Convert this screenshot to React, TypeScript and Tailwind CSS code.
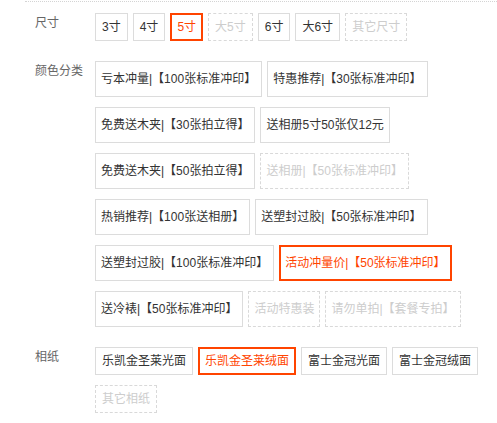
import React from 'react';

type Item = { label: string; state?: 'selected' | 'disabled' };

interface PropRow {
  title: string;
  kind: 'small' | 'tall';
  items: Item[];
}

const rows: PropRow[] = [
  {
    title: '尺寸',
    kind: 'small',
    items: [
      { label: '3寸' },
      { label: '4寸' },
      { label: '5寸', state: 'selected' },
      { label: '大5寸', state: 'disabled' },
      { label: '6寸' },
      { label: '大6寸' },
      { label: '其它尺寸', state: 'disabled' },
    ],
  },
  {
    title: '颜色分类',
    kind: 'tall',
    items: [
      { label: '亏本冲量|【100张标准冲印】' },
      { label: '特惠推荐|【30张标准冲印】' },
      { label: '免费送木夹|【30张拍立得】' },
      { label: '送相册5寸50张仅12元' },
      { label: '免费送木夹|【50张拍立得】' },
      { label: '送相册|【50张标准冲印】', state: 'disabled' },
      { label: '热销推荐|【100张送相册】' },
      { label: '送塑封过胶|【50张标准冲印】' },
      { label: '送塑封过胶|【100张标准冲印】' },
      { label: '活动冲量价|【50张标准冲印】', state: 'selected' },
      { label: '送冷裱|【50张标准冲印】' },
      { label: '活动特惠装', state: 'disabled' },
      { label: '请勿单拍|【套餐专拍】', state: 'disabled' },
    ],
  },
  {
    title: '相纸',
    kind: 'small',
    items: [
      { label: '乐凯金圣莱光面' },
      { label: '乐凯金圣莱绒面', state: 'selected' },
      { label: '富士金冠光面' },
      { label: '富士金冠绒面' },
      { label: '其它相纸', state: 'disabled' },
    ],
  },
];

const SkuButton: React.FC<{ item: Item; kind: 'small' | 'tall' }> = ({ item, kind }) => {
  const size = kind === 'small' ? 'h-[28px]' : 'h-[36px]';
  const pad = kind === 'small' ? 'px-[6px]' : 'px-[5px]';
  const padSel = kind === 'small' ? 'px-[5px]' : 'px-[4px]';

  let look = `border border-solid border-[#dcdcdc] text-[#333] ${pad}`;
  if (item.state === 'selected') look = `border-2 border-solid border-[#ff4400] text-[#ff4400] ${padSel}`;
  if (item.state === 'disabled') look = `border border-dashed border-[#d9d9d9] text-[#cdcdcd] ${pad}`;

  return (
    <li className="mr-[5px] mb-[10px]">
      <a className={`flex items-center whitespace-nowrap bg-white leading-[20px] ${size} ${look}`}>
        {item.label}
      </a>
    </li>
  );
};

export default function App() {
  return (
    <div
      className="w-[497px] h-[423px] bg-white text-[12px] overflow-hidden"
      style={{ fontFamily: '"Liberation Sans", "Noto Sans CJK SC", sans-serif' }}
    >
      <div className="ml-[25px] mt-[1px] border-t border-dotted border-[#d4d4d4]">
        {rows.map((row, i) => (
          <dl key={row.title} className={`flex ${i === 0 ? 'pt-[11px]' : 'pt-[10px]'}`}>
            <dt className="w-[70px] shrink-0 pl-[10px] leading-[20px] text-[#666]">{row.title}</dt>
            <dd className="flex-1">
              <ul className="flex flex-wrap">
                {row.items.map((item) => (
                  <SkuButton key={item.label} item={item} kind={row.kind} />
                ))}
              </ul>
            </dd>
          </dl>
        ))}
      </div>
    </div>
  );
}
